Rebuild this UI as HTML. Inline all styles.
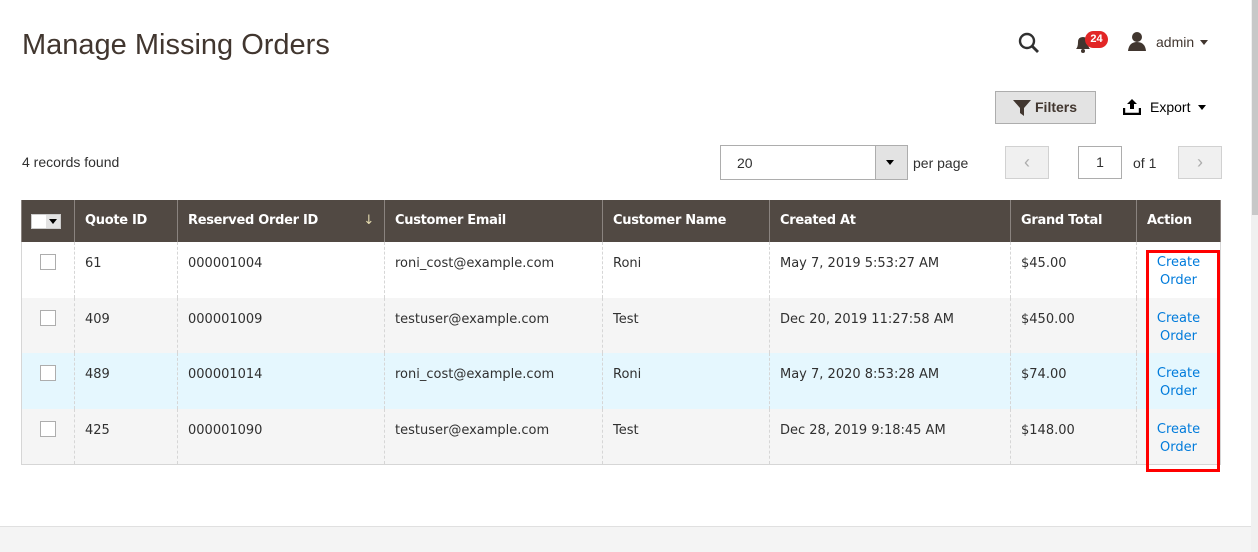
<!DOCTYPE html>
<html><head><meta charset="utf-8"><style>
*{margin:0;padding:0;box-sizing:border-box}
body{width:1258px;height:552px;background:#fff;position:relative;overflow:hidden;font-family:"Liberation Sans",sans-serif;color:#303030}
.a{position:absolute}
table{position:absolute;left:21px;top:200px;border-collapse:collapse;width:1200px}
th{background:#514943;color:#fff;font-family:"DejaVu Sans",sans-serif;font-weight:bold;font-size:13px;letter-spacing:-0.3px;text-align:left;padding:0 10px 2px;height:42px;border-left:1px solid #8a837f;border-right:1px solid #8a837f;white-space:nowrap}
td{font-family:"DejaVu Sans",sans-serif;font-size:13px;color:#303030;vertical-align:top;padding:14px 10px 0;border-left:1px dashed #d6d6d6;height:55.7px;white-space:nowrap}
tr.r td:first-child{border-left:1px solid #d6d6d6}
tr.r td:last-child{border-right:1px solid #d6d6d6}
tr.g td{background:#f5f5f5}
tr.b td{background:#e5f7fe}
tr.last td{border-bottom:1px solid #d6d6d6}
.cb{width:16px;height:16px;border:1px solid #adadad;background:#fff;margin:-2px 0 0 8px}
a{color:#007bdb;text-decoration:none}
.act{text-align:center;line-height:18px;padding-top:12px}
</style></head><body>
<div class="a" style="left:22px;top:29px;font-size:29px;color:#41362f">Manage Missing Orders</div>
<svg class="a" style="left:1018px;top:32px" width="22" height="22" viewBox="0 0 22 22"><circle cx="9" cy="9" r="7" fill="none" stroke="#303030" stroke-width="2.4"/><line x1="14" y1="14" x2="20" y2="20" stroke="#303030" stroke-width="2.8"/></svg>
<svg class="a" style="left:1074px;top:34px" width="18" height="20" viewBox="0 0 18 20"><path d="M2 15 Q4 13 4 8 Q4 3 9 3 Q14 3 14 8 Q14 13 16 15 Z" fill="#41362f"/><circle cx="9" cy="17" r="2" fill="#41362f"/></svg>
<div class="a" style="left:1085px;top:31px;width:23px;height:17px;border-radius:9px;background:#e22626;color:#fff;font-size:11px;font-weight:bold;text-align:center;line-height:17px">24</div>
<svg class="a" style="left:1127px;top:31px" width="20" height="20" viewBox="0 0 20 20"><circle cx="10" cy="6" r="5" fill="#41362f"/><path d="M1 20 Q2 11 10 11 Q18 11 19 20Z" fill="#41362f"/></svg>
<div class="a" style="left:1156px;top:34px;font-size:14px;color:#41362f">admin</div>
<div class="a" style="left:1200px;top:40px;border:4px solid transparent;border-top:5px solid #41362f"></div>
<div class="a" style="left:995px;top:91px;width:101px;height:33px;background:#e3e3e3;border:1px solid #adadad"></div>
<svg class="a" style="left:1013px;top:100px" width="18" height="16" viewBox="0 0 18 16"><path d="M0 0H18L11 8V16L7 13V8Z" fill="#41362f"/></svg>
<div class="a" style="left:1035px;top:99px;font-size:14px;font-weight:bold;color:#41362f">Filters</div>
<svg class="a" style="left:1123px;top:99px" width="18" height="16" viewBox="0 0 18 16"><path d="M9 0L14 5H11V10H7V5H4Z" fill="#000"/><path d="M1 9V15H17V9" fill="none" stroke="#000" stroke-width="2.4"/></svg>
<div class="a" style="left:1150px;top:99px;font-size:14px;color:#000">Export</div>
<div class="a" style="left:1198px;top:105px;border:4px solid transparent;border-top:5px solid #000"></div>
<div class="a" style="left:22px;top:154px;font-size:14px;color:#303030">4 records found</div>
<div class="a" style="left:720px;top:145px;width:188px;height:35px;border:1px solid #adadad"></div>
<div class="a" style="left:875px;top:146px;width:32px;height:33px;background:#e3e3e3;border-left:1px solid #adadad"></div>
<div class="a" style="left:886px;top:160px;border:4px solid transparent;border-top:5px solid #000"></div>
<div class="a" style="left:737px;top:155px;font-size:14px">20</div>
<div class="a" style="left:913px;top:155px;font-size:14px">per page</div>
<div class="a" style="left:1005px;top:146px;width:44px;height:33px;background:#f0f0f0;border:1px solid #d1d1d1;color:#adadad;text-align:center;font-size:18px;line-height:31px">&#8249;</div>
<div class="a" style="left:1078px;top:146px;width:44px;height:33px;border:1px solid #adadad;text-align:center;font-size:14px;line-height:31px">1</div>
<div class="a" style="left:1133px;top:155px;font-size:14px">of 1</div>
<div class="a" style="left:1178px;top:146px;width:44px;height:33px;background:#f0f0f0;border:1px solid #d1d1d1;color:#adadad;text-align:center;font-size:18px;line-height:31px">&#8250;</div>
<table>
<tr><th style="width:53px;padding:0 9px"><div style="width:30px;height:15px;background:#fff;border:1px solid #ccc;position:relative"><div style="position:absolute;right:0;top:0;width:14px;height:13px;background:#e3e3e3"></div><div style="position:absolute;right:3px;top:4px;border:4px solid transparent;border-top:5px solid #000"></div></div></th>
<th style="width:103px">Quote ID</th><th style="width:207px">Reserved Order ID<span style="float:right;color:#e6dcb0;font-weight:normal">&#8595;</span></th><th style="width:218px">Customer Email</th><th style="width:167px">Customer Name</th><th style="width:241px">Created At</th><th style="width:126px">Grand Total</th><th>Action</th></tr>
<tr class="r"><td><div class="cb"></div></td><td>61</td><td>000001004</td><td>roni_cost@example.com</td><td>Roni</td><td>May 7, 2019 5:53:27 AM</td><td>$45.00</td><td class="act"><a>Create<br>Order</a></td></tr>
<tr class="r g"><td><div class="cb"></div></td><td>409</td><td>000001009</td><td>testuser@example.com</td><td>Test</td><td>Dec 20, 2019 11:27:58 AM</td><td>$450.00</td><td class="act"><a>Create<br>Order</a></td></tr>
<tr class="r b"><td><div class="cb"></div></td><td>489</td><td>000001014</td><td>roni_cost@example.com</td><td>Roni</td><td>May 7, 2020 8:53:28 AM</td><td>$74.00</td><td class="act"><a>Create<br>Order</a></td></tr>
<tr class="r g last"><td><div class="cb"></div></td><td>425</td><td>000001090</td><td>testuser@example.com</td><td>Test</td><td>Dec 28, 2019 9:18:45 AM</td><td>$148.00</td><td class="act"><a>Create<br>Order</a></td></tr>
</table>
<div class="a" style="left:1146px;top:250px;width:74px;height:222px;border:3px solid #f00"></div>
<div class="a" style="left:0;top:526px;width:1252px;height:26px;background:#f4f4f4;border-top:1px solid #e0e0e0"></div>
<div class="a" style="left:1251px;top:0;width:7px;height:552px;background:#f0f0f0"></div>
<div class="a" style="left:1252px;top:0;width:6px;height:215px;background:#c8c8c8"></div>
</body></html>
